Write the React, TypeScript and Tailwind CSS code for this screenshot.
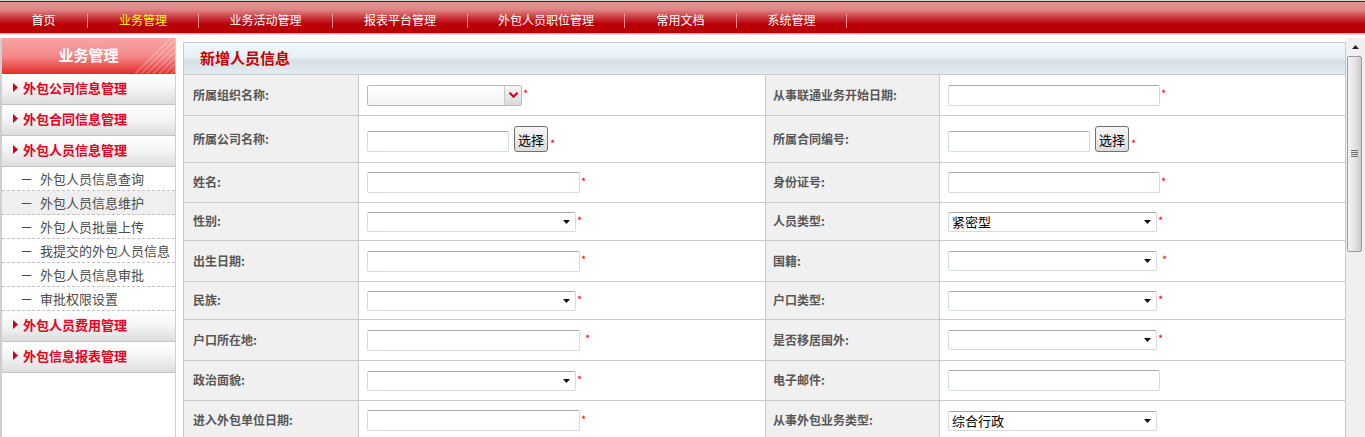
import React from "react";

type Kind = "input" | "select" | "org" | "pick";
type Field = { label: string; kind: Kind; value?: string; star?: "tight" | "gap" };

const NAV = [
    { label: "首页", w: "w-[87px]" },
    { label: "业务管理", w: "w-[110px]", active: true },
    { label: "业务活动管理", w: "w-[133px]" },
    { label: "报表平台管理", w: "w-[134px]" },
    { label: "外包人员职位管理", w: "w-[156px]" },
    { label: "常用文档", w: "w-[111px]" },
    { label: "系统管理", w: "w-[109px]" }
];

const SUB_ITEMS = [
    "外包人员信息查询",
    "外包人员信息维护",
    "外包人员批量上传",
    "我提交的外包人员信息",
    "外包人员信息审批",
    "审批权限设置"
];

const ROWS: { h: string; left: Field; right: Field }[] = [
    {
        h: "h-[41px]",
        left: { label: "所属组织名称", kind: "org", star: "tight" },
        right: { label: "从事联通业务开始日期", kind: "input", star: "tight" }
    },
    {
        h: "h-[47px]",
        left: { label: "所属公司名称", kind: "pick" },
        right: { label: "所属合同编号", kind: "pick" }
    },
    {
        h: "h-[40px]",
        left: { label: "姓名", kind: "input", star: "tight" },
        right: { label: "身份证号", kind: "input", star: "tight" }
    },
    {
        h: "h-[38px]",
        left: { label: "性别", kind: "select", star: "tight" },
        right: { label: "人员类型", kind: "select", value: "紧密型", star: "tight" }
    },
    {
        h: "h-[41px]",
        left: { label: "出生日期", kind: "input", star: "tight" },
        right: { label: "国籍", kind: "select", star: "gap" }
    },
    {
        h: "h-[38px]",
        left: { label: "民族", kind: "select", star: "tight" },
        right: { label: "户口类型", kind: "select", star: "tight" }
    },
    {
        h: "h-[41px]",
        left: { label: "户口所在地", kind: "input", star: "gap" },
        right: { label: "是否移居国外", kind: "select", star: "tight" }
    },
    {
        h: "h-[40px]",
        left: { label: "政治面貌", kind: "select", star: "tight" },
        right: { label: "电子邮件", kind: "input" }
    },
    {
        h: "h-[40px]",
        left: { label: "进入外包单位日期", kind: "input", star: "tight" },
        right: { label: "从事外包业务类型", kind: "select", value: "综合行政" }
    }
];

const Star = ({ gap, className = "" }: { gap?: boolean; className?: string }) => (
    <span className={`${gap ? "ml-[5px]" : "ml-[1px]"} text-[11px] leading-none text-[#ff0000] ${className}`}>*</span>
);

const TextBox = ({ w }: { w: string }) => (
    <input
        type="text"
        className={`h-[21px] rounded-[2px] border border-[#d5dae0] border-t-[#a8a8a8] bg-white outline-none ${w}`}
    />
);

const SelectBox = ({ value }: { value?: string }) => (
    <div className="flex h-[20px] w-[209px] items-center justify-between rounded-[2px] border border-[#d5dae0] border-t-[#a8a8a8] bg-white pl-[3px] pr-[5px]">
        <span className="text-[13px] leading-none text-black">{value}</span>
        <svg width="7" height="4" viewBox="0 0 7 4">
            <path d="M0 0H7L3.5 4Z" fill="#111" />
        </svg>
    </div>
);

const OrgSelect = () => (
    <div className="flex h-[21px] w-[155px] rounded-[2px] border border-[#b9b9b9] bg-[linear-gradient(to_bottom,#ffffff,#f3f3f3)]">
        <div className="flex-1" />
        <div className="flex w-[17px] items-center justify-center border-l border-[#c8c8c8] bg-[linear-gradient(to_bottom,#f7f7f7,#d9d9d9)]">
            <svg width="9" height="6" viewBox="0 0 9 6">
                <path d="M0.5 0.8L4.5 4.8L8.5 0.8" fill="none" stroke="#d00010" strokeWidth="2" />
            </svg>
        </div>
    </div>
);

const PickButton = () => (
    <button className="ml-[5px] h-[26px] w-[34px] rounded-[3px] border border-[#707070] bg-[linear-gradient(to_bottom,#f6f6f6,#dcdcdc)] text-[13px] leading-none text-black">
        选择
    </button>
);

const FieldValue = ({ field, side }: { field: Field; side: "left" | "right" }) => {
    const inputW = side === "left" ? "w-[213px]" : "w-[212px]";

    if (field.kind === "pick") {
        return (
            <div className="flex items-end">
                <TextBox w="w-[142px]" />
                <PickButton />
                <Star className="mb-[3px] ml-[2px]" />
            </div>
        );
    }

    return (
        <div className="flex items-center">
            {field.kind === "input" && <TextBox w={inputW} />}
            {field.kind === "select" && <SelectBox value={field.value} />}
            {field.kind === "org" && <OrgSelect />}
            {field.star ? <Star gap={field.star === "gap"} className="-mt-[3px]" /> : null}
        </div>
    );
};

const Label = ({ text, pad }: { text: string; pad: string }) => (
    <div className={`flex items-center border-r border-[#cacaca] bg-[#f0f0f0] pb-[1px] ${pad}`}>
        <span className="text-[12px] font-bold leading-none text-[#575757]">{text}:</span>
    </div>
);

const MenuHead = ({ label }: { label: string }) => (
    <div className="flex h-[31px] shrink-0 items-center border-b border-[#c4c4c4] bg-[linear-gradient(to_bottom,#ffffff_0%,#f6f6f6_45%,#dddddd_100%)] pb-[3px] pl-[11px]">
        <svg width="5" height="9" viewBox="0 0 5 9" className="mr-[5px]">
            <path d="M0 0L5 4.5L0 9Z" fill="#d0001a" />
        </svg>
        <span className="text-[13px] font-bold leading-none text-[#e8001c]">{label}</span>
    </div>
);

const Sidebar = () => (
    <div className="flex h-full w-[176px] shrink-0 flex-col border-l-2 border-r border-[#cfcfcf] bg-white">
        <div className="relative flex h-[36px] shrink-0 items-center justify-center overflow-hidden bg-[linear-gradient(to_bottom,#f8a4a4_0%,#f48a8a_50%,#e52b2b_100%)] pb-[3px]">
            <span className="text-[15px] font-bold leading-none text-white">业务管理</span>
            <svg className="absolute right-0 top-0" width="40" height="36" viewBox="0 0 40 36">
                {[0, 6, 12, 18, 24, 30, 36, 42, 48, 54, 60].map(x => (
                    <line key={x} x1={x} y1={36} x2={x + 36} y2={0} stroke="#ffffff" strokeOpacity="0.22" strokeWidth="2" />
                ))}
            </svg>
        </div>
        <MenuHead label="外包公司信息管理" />
        <MenuHead label="外包合同信息管理" />
        <MenuHead label="外包人员信息管理" />
        {SUB_ITEMS.map((item, i) => (
            <div
                key={item}
                className={`flex h-[24px] shrink-0 items-center border-b border-dashed border-[#c4c4c4] pl-[18px] text-[13px] leading-none text-[#4b4b4b] ${
                    i === 1 ? "bg-[#efefef]" : ""
                }`}
            >
                <span className="w-[20px]">－</span>
                {item}
            </div>
        ))}
        <MenuHead label="外包人员费用管理" />
        <MenuHead label="外包信息报表管理" />
    </div>
);

const Scrollbar = () => (
    <div className="flex h-full w-[19px] shrink-0 flex-col bg-[#f0f0f0]">
        <div className="flex h-[18px] items-center justify-center">
            <svg width="7" height="4" viewBox="0 0 7 4">
                <path d="M0 4H7L3.5 0Z" fill="#222" />
            </svg>
        </div>
        <div className="ml-[1px] flex h-[196px] w-[15px] items-center justify-center rounded-[2px] border border-[#9c9c9c] bg-[linear-gradient(to_right,#f4f4f4,#e4e4e4_50%,#cdcdcd)]">
            <svg width="7" height="8" viewBox="0 0 7 8">
                {[0.5, 2.5, 4.5, 6.5].map(y => (
                    <line key={y} x1="0" y1={y} x2="7" y2={y} stroke="#6e6e6e" strokeWidth="1" />
                ))}
            </svg>
        </div>
    </div>
);

export default function App() {
    return (
        <div className="flex h-[437px] w-[1365px] flex-col overflow-hidden bg-white font-['Noto_Sans_CJK_SC','Noto_Sans',sans-serif]">
            <div className="shrink-0 border-t border-[#d6d6d6]">
                <div className="h-[1px] bg-[#8e0010]" />
                <div className="flex h-[31px] bg-[linear-gradient(to_bottom,#e69494_0%,#e08585_25%,#c52a2f_55%,#bb0008_72%,#b80006_100%)] pt-[5px]">
                    {NAV.map(item => (
                        <React.Fragment key={item.label}>
                            <div
                                className={`flex ${item.w} items-center justify-center text-[12px] leading-none ${
                                    item.active ? "text-[#ffff00]" : "text-white"
                                }`}
                            >
                                {item.label}
                            </div>
                            <div className="mt-[6px] h-[15px] w-[1px] bg-[#e89090]" />
                        </React.Fragment>
                    ))}
                </div>
                <div className="h-[1px] bg-[#bdbdbd]" />
                <div className="h-[1px] bg-[#dcdcdc]" />
            </div>

            <div className="mt-[3px] flex min-h-0 flex-1">
                <Sidebar />

                <div className="w-[1170px] shrink-0 pl-[7px] pt-[4px]">
                    <div className="border-x border-t border-[#cacaca]">
                        <div className="flex h-[32px] items-center border-b border-[#cacaca] bg-[linear-gradient(to_bottom,#f1f8fc_0%,#e6f0f5_45%,#d7e0e4_58%,#e3ecf0_100%)] pb-[2px] pl-[16px]">
                            <span className="text-[15px] font-bold leading-none text-[#c40000]">新增人员信息</span>
                        </div>
                        {ROWS.map(row => (
                            <div
                                key={row.left.label}
                                className={`grid ${row.h} grid-cols-[175px_407px_174px_405px] border-b border-[#cacaca]`}
                            >
                                <Label text={row.left.label} pad="pl-[9px]" />
                                <div className="flex items-center border-r border-[#cacaca] pl-[8px]">
                                    <FieldValue field={row.left} side="left" />
                                </div>
                                <Label text={row.right.label} pad="pl-[7px]" />
                                <div className="flex items-center pl-[8px]">
                                    <FieldValue field={row.right} side="right" />
                                </div>
                            </div>
                        ))}
                    </div>
                </div>

                <Scrollbar />
            </div>
        </div>
    );
}
